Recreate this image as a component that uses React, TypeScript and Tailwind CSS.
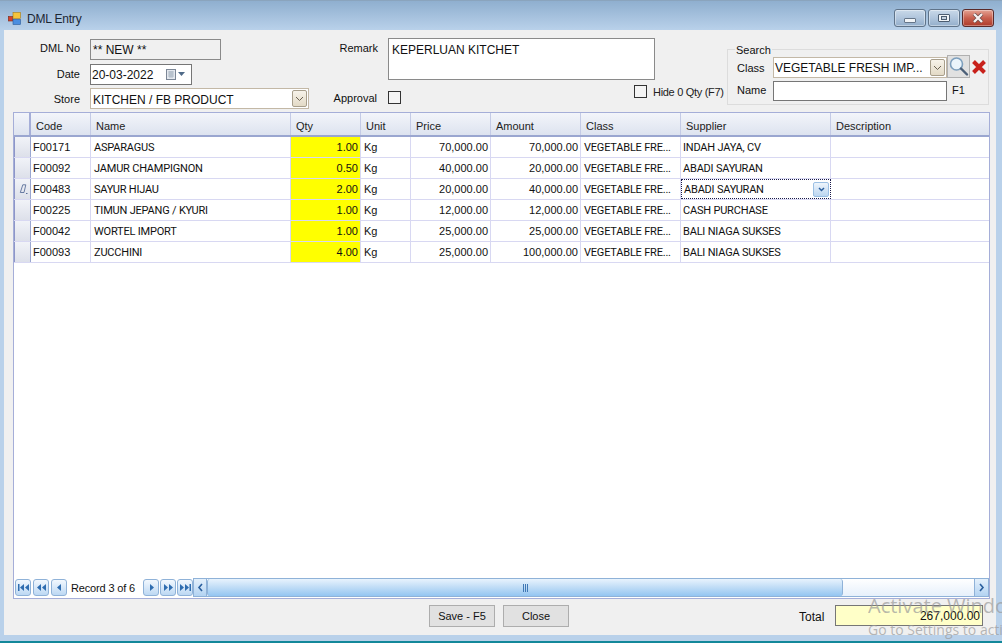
import React from "react";

const cols = [
  { k: "Code", w: "w-[60px]" },
  { k: "Name", w: "w-[200px]" },
  { k: "Qty", w: "w-[70px]" },
  { k: "Unit", w: "w-[50px]" },
  { k: "Price", w: "w-[80px]" },
  { k: "Amount", w: "w-[90px]" },
  { k: "Class", w: "w-[100px]" },
  { k: "Supplier", w: "w-[150px]" },
  { k: "Description", w: "w-[158px]" },
];

const rows = [
  ["F00171", "ASPARAGUS", "1.00", "Kg", "70,000.00", "70,000.00", "VEGETABLE FRE...", "INDAH JAYA, CV"],
  ["F00092", "JAMUR CHAMPIGNON", "0.50", "Kg", "40,000.00", "20,000.00", "VEGETABLE FRE...", "ABADI SAYURAN"],
  ["F00483", "SAYUR HIJAU", "2.00", "Kg", "20,000.00", "40,000.00", "VEGETABLE FRE...", "ABADI SAYURAN"],
  ["F00225", "TIMUN JEPANG / KYURI", "1.00", "Kg", "12,000.00", "12,000.00", "VEGETABLE FRE...", "CASH PURCHASE"],
  ["F00042", "WORTEL IMPORT", "1.00", "Kg", "25,000.00", "25,000.00", "VEGETABLE FRE...", "BALI NIAGA SUKSES"],
  ["F00093", "ZUCCHINI", "4.00", "Kg", "25,000.00", "100,000.00", "VEGETABLE FRE...", "BALI NIAGA SUKSES"],
];

function ComboArrow() {
  return (
    <span className="flex h-[17px] w-[15px] shrink-0 items-center justify-center rounded-[2px] border border-[#a89f8c] bg-gradient-to-b from-[#f7f3ea] to-[#e3dac6]">
      <svg width="9" height="6" viewBox="0 0 9 6" fill="none">
        <path d="M1 1l3.5 3.5L8 1" stroke="#6b6253" strokeWidth="1" />
      </svg>
    </span>
  );
}

function NavBtn({ d, bar }: { d: "l" | "r"; bar?: "dbl" | "end" }) {
  const tri = d === "l" ? "M7 2v7L3 5.5z" : "M4 2v7l4-3.5z";
  return (
    <span className="flex h-[17px] w-[16px] items-center justify-center rounded-[3px] border border-[#8fb2d8] bg-gradient-to-b from-[#f2f8fe] to-[#bdd8f3]">
      <svg width="11" height="11" viewBox="0 0 11 11" fill="#2f6db0">
        {bar === "end" && d === "l" && <path d="M0 2h1.500v7H0zM6 2v7L2 5.500zM11 2v7L7 5.500z" />}
        {bar === "end" && d === "r" && <path d="M9.500 2H11v7H9.500zM0 2v7l4-3.500zM5 2v7l4-3.500z" />}
        {bar === "dbl" && d === "l" && <path d="M5 2v7L1 5.500zM10 2v7L6 5.500z" />}
        {bar === "dbl" && d === "r" && <path d="M1 2v7l4-3.500zM6 2v7l4-3.500z" />}
        {!bar && <path d={tri} />}
      </svg>
    </span>
  );
}

function WinBtn({ kind }: { kind: "min" | "max" | "close" }) {
  if (kind === "close") {
    return (
      <span className="flex h-[18px] w-[32px] items-center justify-center rounded-[3px] border border-[#5a2a2a] bg-gradient-to-b from-[#e4a394] via-[#c8604f] to-[#ad3a2a] shadow-[inset_0_0_0_1px_rgba(255,255,255,0.35)]">
        <svg width="14" height="10" viewBox="0 0 14 10">
          <path d="M3 1l8 8M11 1l-8 8" stroke="#6b4a48" strokeWidth="3.800" />
          <path d="M3 1l8 8M11 1l-8 8" stroke="#f6f1f0" strokeWidth="2.400" />
        </svg>
      </span>
    );
  }
  return (
    <span className="flex h-[18px] w-[32px] items-center justify-center rounded-[3px] border border-[#5f7389] bg-gradient-to-b from-[#c9d9e9] via-[#b0c5dc] to-[#93aecb] shadow-[inset_0_0_0_1px_rgba(255,255,255,0.4)]">
      {kind === "min" ? (
        <span className="mt-[4px] h-[5px] w-[12px] rounded-[1px] border border-[#66768a] bg-[#f1f4f7]" />
      ) : (
        <span className="flex h-[8px] w-[12px] items-center justify-center rounded-[1px] border border-[#4b5c70] bg-[#f1f4f7]">
          <span className="h-[4px] w-[6px] border border-[#4b5c70] bg-[#c6d2df]" />
        </span>
      )}
    </span>
  );
}

const caps = "pt-[2px] font-['Roboto',sans-serif] tracking-[-0.2px]";

export default function App() {
  return (
    <div className="relative flex h-[643px] w-[1002px] flex-col overflow-hidden border-b-2 border-[#13889a] bg-[#b9d1ea] font-['Liberation_Sans',sans-serif] text-[11px] text-[#111]">
      {/* title bar */}
      <div className="flex h-[30px] shrink-0 items-start justify-between border-t border-[#8aa4bd] bg-gradient-to-b from-[#8fafcf] to-[#b9d1ea] pl-[8px] pr-[8px]">
        <div className="flex h-[29px] items-center gap-[6px] pt-[6px]">
          <svg width="13" height="13" viewBox="0 0 13 13">
            <rect x="0.300" y="4.500" width="4.500" height="4.500" fill="#d8402a" stroke="#7a2a1a" strokeWidth="0.600" />
            <rect x="5" y="0.500" width="7.500" height="6" fill="#f4c33c" stroke="#a87c18" strokeWidth="0.600" />
            <rect x="5" y="7.500" width="7.500" height="5" fill="#4a8ee0" stroke="#2a5a9a" strokeWidth="0.600" />
          </svg>
          <span className="text-[12px] tracking-[-0.2px] text-[#1c2733]">DML Entry</span>
        </div>
        <div className="flex gap-[2px] pt-[8px]">
          <WinBtn kind="min" />
          <WinBtn kind="max" />
          <WinBtn kind="close" />
        </div>
      </div>

      {/* client */}
      <div className="mb-[6px] ml-[4px] mr-[6px] flex min-h-0 flex-1 flex-col bg-[#f0f0f0] pl-[9px] pr-[6px]">
        {/* form */}
        <div className="flex h-[82px] shrink-0 pt-[9px]">
          {/* left fields */}
          <div className="flex w-[295px] shrink-0 flex-col">
            <div className="flex h-[21px] items-center">
              <span className="w-[67px] shrink-0 pb-[2px] text-right">DML No</span>
              <span className="ml-[10px] flex h-[21px] w-[131px] shrink-0 items-center border border-[#8a8a8a] bg-[#f0f0f0] pl-[2px] text-[12px]">** NEW **</span>
            </div>
            <div className="mt-[4px] flex h-[21px] items-center">
              <span className="w-[67px] shrink-0 text-right">Date</span>
              <span className="ml-[10px] flex h-[21px] w-[102px] shrink-0 items-center justify-between border border-[#767676] bg-white pl-[1px] pr-[5px] text-[12px]">
                20-03-2022
                <svg width="20" height="11" viewBox="0 0 20 11">
                  <rect x="0.500" y="0.500" width="9" height="10" fill="#e4e8ee" stroke="#7c8796" />
                  <path d="M2 3h6M2 5h6M2 7h6M4 2v7M6 2v7" stroke="#9aa6b4" strokeWidth="0.700" />
                  <path d="M12 3h7l-3.500 4z" fill="#4f6a88" />
                </svg>
              </span>
            </div>
            <div className="mt-[3px] flex h-[21px] items-center">
              <span className="w-[67px] shrink-0 pt-[1px] text-right">Store</span>
              <span className="ml-[10px] flex h-[21px] w-[219px] shrink-0 items-center justify-between border border-[#c3b8a6] bg-white pl-[2px] pr-[1px] text-[12px]">
                <span className="pt-[2px]">KITCHEN / FB PRODUCT</span>
                <ComboArrow />
              </span>
            </div>
          </div>

          {/* remark */}
          <div className="-mt-[1px] flex w-[347px] shrink-0 flex-col">
            <div className="flex h-[42px]">
              <span className="w-[70px] shrink-0 pt-[3px] text-right leading-[14px]">Remark</span>
              <span className="ml-[10px] h-[42px] w-[267px] shrink-0 border border-[#8a8a8a] bg-white pl-[3px] pt-[4px] text-[12px] leading-[14px]">KEPERLUAN KITCHET</span>
            </div>
            <div className="mt-[9px] flex items-center">
              <span className="w-[69px] shrink-0 pt-[1px] text-right">Approval</span>
              <span className="ml-[11px] h-[13px] w-[13px] shrink-0 border border-[#333] bg-[#f4f4f4]" />
            </div>
          </div>

          {/* hide qty */}
          <div className="-ml-[21px] flex w-[93px] shrink-0 flex-col justify-end pb-[12px]">
            <div className="flex items-center gap-[6px]">
              <span className="h-[13px] w-[13px] shrink-0 border border-[#333] bg-[#f4f4f4]" />
              <span className="whitespace-nowrap tracking-[-0.3px] text-[#222]">Hide 0 Qty (F7)</span>
            </div>
          </div>

          {/* search */}
          <div className="relative mt-[10px] h-[56px] w-[262px] shrink-0 border border-[#dcdcdc] pl-[9px] pt-[5px]">
            <span className="absolute -top-[7px] left-[7px] bg-[#f0f0f0] px-[1px] leading-[14px]">Search</span>
            <div className="flex h-[23px] items-end">
              <span className="w-[36px] shrink-0 self-center pt-[3px]">Class</span>
              <span className="flex h-[21px] w-[174px] shrink-0 items-center justify-between border border-[#c3b8a6] bg-white pl-[1px] pr-[1px] text-[12px]">
                <span className="pt-[1px]">VEGETABLE FRESH IMP...</span>
                <ComboArrow />
              </span>
              <span className="flex h-[23px] w-[23px] shrink-0 items-center justify-center border border-[#b0b0b0] bg-[#e1e1e1]">
                <svg width="21" height="21" viewBox="0 0 21 21">
                  <circle cx="8.500" cy="8" r="6" fill="#eaf4fb" stroke="#7d9fbd" strokeWidth="1.600" />
                  <path d="M13 12.500l6 6" stroke="#4b5f78" strokeWidth="2.400" strokeLinecap="round" />
                </svg>
              </span>
              <svg className="mb-[3px] ml-[1px] shrink-0" width="16" height="16" viewBox="0 0 16 16">
                <path d="M2.500 2.500l11 11M13.500 2.500l-11 11" stroke="#c8211b" strokeWidth="4" />
              </svg>
            </div>
            <div className="mt-[3px] flex h-[20px] items-center">
              <span className="w-[36px] shrink-0 pb-[2px]">Name</span>
              <span className="h-[20px] w-[174px] shrink-0 border border-[#767676] bg-white" />
              <span className="ml-[5px] pb-[2px]">F1</span>
            </div>
          </div>
        </div>

        {/* grid */}
        <div className="flex h-[487px] shrink-0 flex-col border border-[#a5aed8] bg-white">
          <div className="flex h-[24px] shrink-0 border-b-2 border-[#9aa6d0] bg-gradient-to-b from-[#f3f5fa] to-[#dde3ef]">
            <span className="w-[17px] shrink-0 border-r-2 border-[#a5aed8]" />
            {cols.map((c) => (
              <span key={c.k} className={`${c.w} flex shrink-0 items-center border-r border-[#c4cbe6] pl-[5px] pt-[4px] text-[#222] last:border-r-0`}>
                {c.k}
              </span>
            ))}
          </div>
          {rows.map((r, i) => (
            <div key={r[0]} className="flex h-[21px] shrink-0 border-b border-[#d8d8f2]">
              <span className="flex w-[17px] shrink-0 items-center justify-center border-x border-l-[#8d96c8] border-r-[#9aa6d0] bg-gradient-to-b from-[#f1f3f8] to-[#dde0ea] pl-[1px]">
                {i === 2 && (
                  <svg width="9" height="11" viewBox="0 0 9 11" fill="none">
                    <path d="M3.800 0.800h3L5 8.500H1.300z" stroke="#5a6f9a" strokeWidth="0.900" />
                    <path d="M7 9.500h1.500" stroke="#5a6f9a" />
                  </svg>
                )}
              </span>
              <span className="flex w-[60px] shrink-0 items-center border-r border-[#d8d8f2] pl-[2px]">{r[0]}</span>
              <span className={`flex w-[200px] shrink-0 items-center border-r border-[#d8d8f2] pl-[3px] ${caps}`}>{r[1]}</span>
              <span className="flex w-[70px] shrink-0 items-center justify-end border-r border-[#d8d8f2] bg-[#ffff00] pr-[2px]">{r[2]}</span>
              <span className="flex w-[50px] shrink-0 items-center border-r border-[#d8d8f2] pl-[3px]">{r[3]}</span>
              <span className="flex w-[80px] shrink-0 items-center justify-end border-r border-[#d8d8f2] pr-[2px]">{r[4]}</span>
              <span className="flex w-[90px] shrink-0 items-center justify-end border-r border-[#d8d8f2] pr-[2px]">{r[5]}</span>
              <span className={`flex w-[100px] shrink-0 items-center whitespace-nowrap border-r border-[#d8d8f2] pl-[3px] ${caps}`}>{r[6]}</span>
              {i === 2 ? (
                <span className="flex w-[150px] shrink-0 items-center justify-between border border-dotted border-[#1a1a4a] pl-[2px] pr-[1px]">
                  <span className={caps}>{r[7]}</span>
                  <span className="flex h-[15px] w-[16px] items-center justify-center rounded-[2px] border border-[#9cc0e4] bg-gradient-to-b from-[#eef5fc] to-[#bcd6f0]">
                    <svg width="7" height="5" viewBox="0 0 7 5" fill="none">
                      <path d="M1 1l2.500 2.500L6 1" stroke="#2a5f9e" strokeWidth="1.500" />
                    </svg>
                  </span>
                </span>
              ) : (
                <span className={`flex w-[150px] shrink-0 items-center border-r border-[#d8d8f2] pl-[2px] ${caps}`}>{r[7]}</span>
              )}
              <span className="w-[158px] shrink-0" />
            </div>
          ))}
          <div className="flex-1" />
          {/* navigator */}
          <div className="flex h-[20px] shrink-0 items-center pb-[1px] pl-[1px]">
            <div className="flex gap-[2px]">
              <NavBtn d="l" bar="end" />
              <NavBtn d="l" bar="dbl" />
              <NavBtn d="l" />
            </div>
            <span className="ml-[4px] w-[72px] whitespace-nowrap pt-[1px] tracking-[-0.15px]">Record 3 of 6</span>
            <div className="flex gap-[1px]">
              <NavBtn d="r" />
              <NavBtn d="r" bar="dbl" />
              <NavBtn d="r" bar="end" />
            </div>
            <div className="flex h-[19px] min-w-0 flex-1 border border-[#8fb2d8] bg-gradient-to-b from-white to-[#e6f0fb]">
              <span className="flex w-[13px] shrink-0 items-center justify-center border-r border-[#8fb2d8] bg-gradient-to-b from-[#e4f0fb] to-[#b3d3f2]">
                <svg width="7" height="9" viewBox="0 0 7 9" fill="none"><path d="M5 1L2 4.500 5 8" stroke="#2a5f9e" strokeWidth="1.600" /></svg>
              </span>
              <span className="flex w-[636px] shrink-0 items-center justify-center rounded-[3px] border-x border-[#8fb2d8] bg-gradient-to-b from-[#e8f3fd] via-[#bfdcf6] to-[#93c5f2]">
                <span className="flex gap-[1px]">
                  <span className="h-[8px] w-[1px] bg-[#3f78b5]" />
                  <span className="h-[8px] w-[1px] bg-[#3f78b5]" />
                  <span className="h-[8px] w-[1px] bg-[#3f78b5]" />
                </span>
              </span>
              <span className="flex-1" />
              <span className="flex w-[14px] shrink-0 items-center justify-center border-l border-[#8fb2d8] bg-gradient-to-b from-[#e4f0fb] to-[#b3d3f2]">
                <svg width="7" height="9" viewBox="0 0 7 9" fill="none"><path d="M2 1l3 3.500L2 8" stroke="#2a5f9e" strokeWidth="1.600" /></svg>
              </span>
            </div>
          </div>
        </div>

        {/* footer */}
        <div className="flex min-h-0 flex-1 items-start pt-[6px]">
          <div className="ml-[416px] flex gap-[8px]">
            <span className="flex h-[22px] w-[66px] items-center justify-center border border-[#adadad] bg-[#e1e1e1]">Save - F5</span>
            <span className="flex h-[22px] w-[66px] items-center justify-center border border-[#adadad] bg-[#e1e1e1]">Close</span>
          </div>
          <span className="ml-[230px] w-[26px] whitespace-nowrap pt-[3px] text-[12px]">Total</span>
          <span className="ml-[10px] flex h-[21px] w-[148px] items-center justify-end border border-[#767676] bg-[#ffffc8] pr-[2px] text-[12px]">267,000.00</span>
        </div>
      </div>

      {/* watermark */}
      <div className="pointer-events-none absolute left-[868px] top-[593px] w-[134px] overflow-hidden whitespace-nowrap font-['Open_Sans',sans-serif] text-[#9a9a9a]/70">
        <div className="text-[20px] leading-[26px]">Activate Windows</div>
        <div className="mt-[2px] text-[14px] leading-[18px]">Go to Settings to activate Windows.</div>
      </div>
    </div>
  );
}
